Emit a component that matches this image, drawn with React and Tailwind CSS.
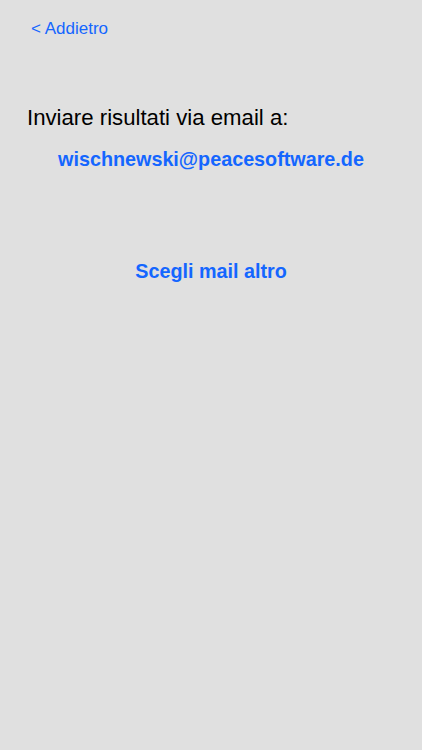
export default function App() {
  return (
    <div className="w-[422px] h-[750px] bg-[#e0e0e0] flex flex-col" style={{ fontFamily: '"Liberation Sans", Arial, sans-serif' }}>
      <div className="h-[56px] flex items-center pl-[31px]">
        <span className="text-[17px] text-[#1466ff] leading-none">&lt; Addietro</span>
      </div>
      <div className="pt-[49px] pl-[27px]">
        <span className="text-[22.2px] text-black leading-[26px]">Inviare risultati via email a:</span>
      </div>
      <div className="pt-[15px] flex justify-center">
        <span className="text-[19.75px] font-bold text-[#1466ff] leading-[24px]">wischnewski@peacesoftware.de</span>
      </div>
      <div className="pt-[88px] flex justify-center">
        <span className="text-[19.75px] font-bold text-[#1466ff] leading-[24px]">Scegli mail altro</span>
      </div>
    </div>
  );
}
